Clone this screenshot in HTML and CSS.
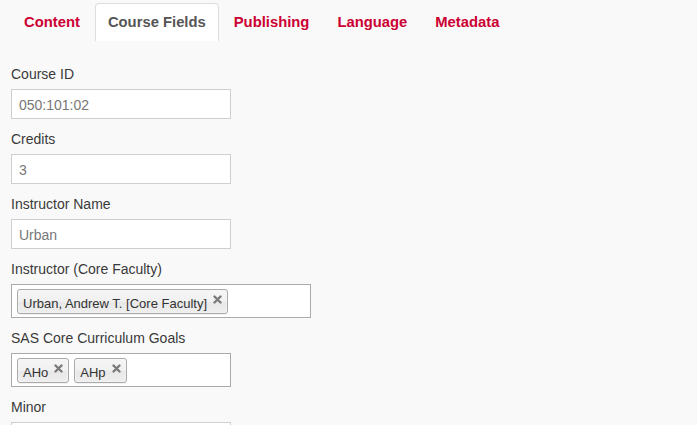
FILE: index.html
```html
<!DOCTYPE html>
<html>
<head>
<meta charset="utf-8">
<link rel="stylesheet" href="styles.css">
</head>
<body>
<div class="page">
  <ul class="tabs">
    <li class="tab">Content</li>
    <li class="tab active">Course Fields</li>
    <li class="tab">Publishing</li>
    <li class="tab">Language</li>
    <li class="tab">Metadata</li>
  </ul>
  <form class="form">
    <div class="field">
      <label class="label">Course ID</label>
      <input class="input" type="text" value="050:101:02">
    </div>
    <div class="field">
      <label class="label">Credits</label>
      <input class="input" type="text" value="3">
    </div>
    <div class="field">
      <label class="label">Instructor Name</label>
      <input class="input" type="text" value="Urban">
    </div>
    <div class="field">
      <label class="label">Instructor (Core Faculty)</label>
      <div class="multi wide">
        <span class="chip"><span class="chip-text">Urban, Andrew T. [Core Faculty]</span><svg class="chip-x" width="9" height="9" viewBox="0 0 9 9"><path d="M1.5 1.5L7.5 7.5M7.5 1.5L1.5 7.5" stroke="#7a7a7a" stroke-width="2.4" stroke-linecap="round"/></svg></span>
      </div>
    </div>
    <div class="field">
      <label class="label">SAS Core Curriculum Goals</label>
      <div class="multi">
        <span class="chip"><span class="chip-text">AHo</span><svg class="chip-x" width="9" height="9" viewBox="0 0 9 9"><path d="M1.5 1.5L7.5 7.5M7.5 1.5L1.5 7.5" stroke="#7a7a7a" stroke-width="2.4" stroke-linecap="round"/></svg></span>
        <span class="chip"><span class="chip-text">AHp</span><svg class="chip-x" width="9" height="9" viewBox="0 0 9 9"><path d="M1.5 1.5L7.5 7.5M7.5 1.5L1.5 7.5" stroke="#7a7a7a" stroke-width="2.4" stroke-linecap="round"/></svg></span>
      </div>
    </div>
    <div class="field">
      <label class="label">Minor</label>
      <input class="input" type="text" value="">
    </div>
  </form>
</div>
</body>
</html>
```
FILE: styles.css
```css
html, body {
  margin: 0;
  padding: 0;
  background: #f9f9f9;
}
body {
  font-family: "Liberation Sans", Arial, sans-serif;
  color: #333;
  overflow: hidden;
}
.page {
  padding: 3px 11px 0 11px;
}
.tabs {
  list-style: none;
  margin: 0;
  padding: 0;
  display: flex;
  height: 38px;
}
.tab {
  padding: 8px 12px 9px;
  line-height: 20px;
  font-size: 14.8px;
  font-weight: bold;
  color: #cc0033;
  border: 1px solid transparent;
  border-bottom: 0;
  border-radius: 4px 4px 0 0;
  margin-right: 2px;
}
.tab.active {
  background: #fff;
  color: #555;
  border-color: #dddddd;
}
.form {
  padding-top: 23px;
}
.field {
  display: flex;
  flex-direction: column;
  align-items: flex-start;
  margin-bottom: 10px;
}
.label {
  font-size: 14px;
  line-height: 20px;
  color: #3a3a3a;
  margin-bottom: 5px;
}
.input {
  box-sizing: border-box;
  width: 220px;
  height: 30px;
  margin: 0;
  padding: 5px 7px 3px;
  line-height: 20px;
  font-family: "Liberation Sans", Arial, sans-serif;
  font-size: 14px;
  color: #777;
  background: #fff;
  border: 1px solid #cfcfcf;
  border-radius: 0;
  outline: none;
}
.multi {
  box-sizing: border-box;
  width: 220px;
  height: 34px;
  background: #fff;
  border: 1px solid #aaa;
  display: flex;
  align-items: flex-start;
  padding: 4px 0 0 5px;
  gap: 5px;
}
.multi.wide {
  width: 300px;
}
.chip {
  box-sizing: border-box;
  height: 25px;
  display: flex;
  align-items: flex-start;
  padding: 6px 5px 2px 5px;
  border: 1px solid #aaa;
  border-radius: 3px;
  background: linear-gradient(#f4f4f4 20%, #f0f0f0 50%, #e8e8e8 52%, #eeeeee 100%);
  box-shadow: 0 0 2px #fff inset, 0 1px 0 rgba(0,0,0,0.05);
}
.chip-text {
  font-size: 13px;
  line-height: 15px;
  color: #333;
}
.chip-x {
  display: block;
  margin-left: 6px;
  margin-top: -1px;
}
```
